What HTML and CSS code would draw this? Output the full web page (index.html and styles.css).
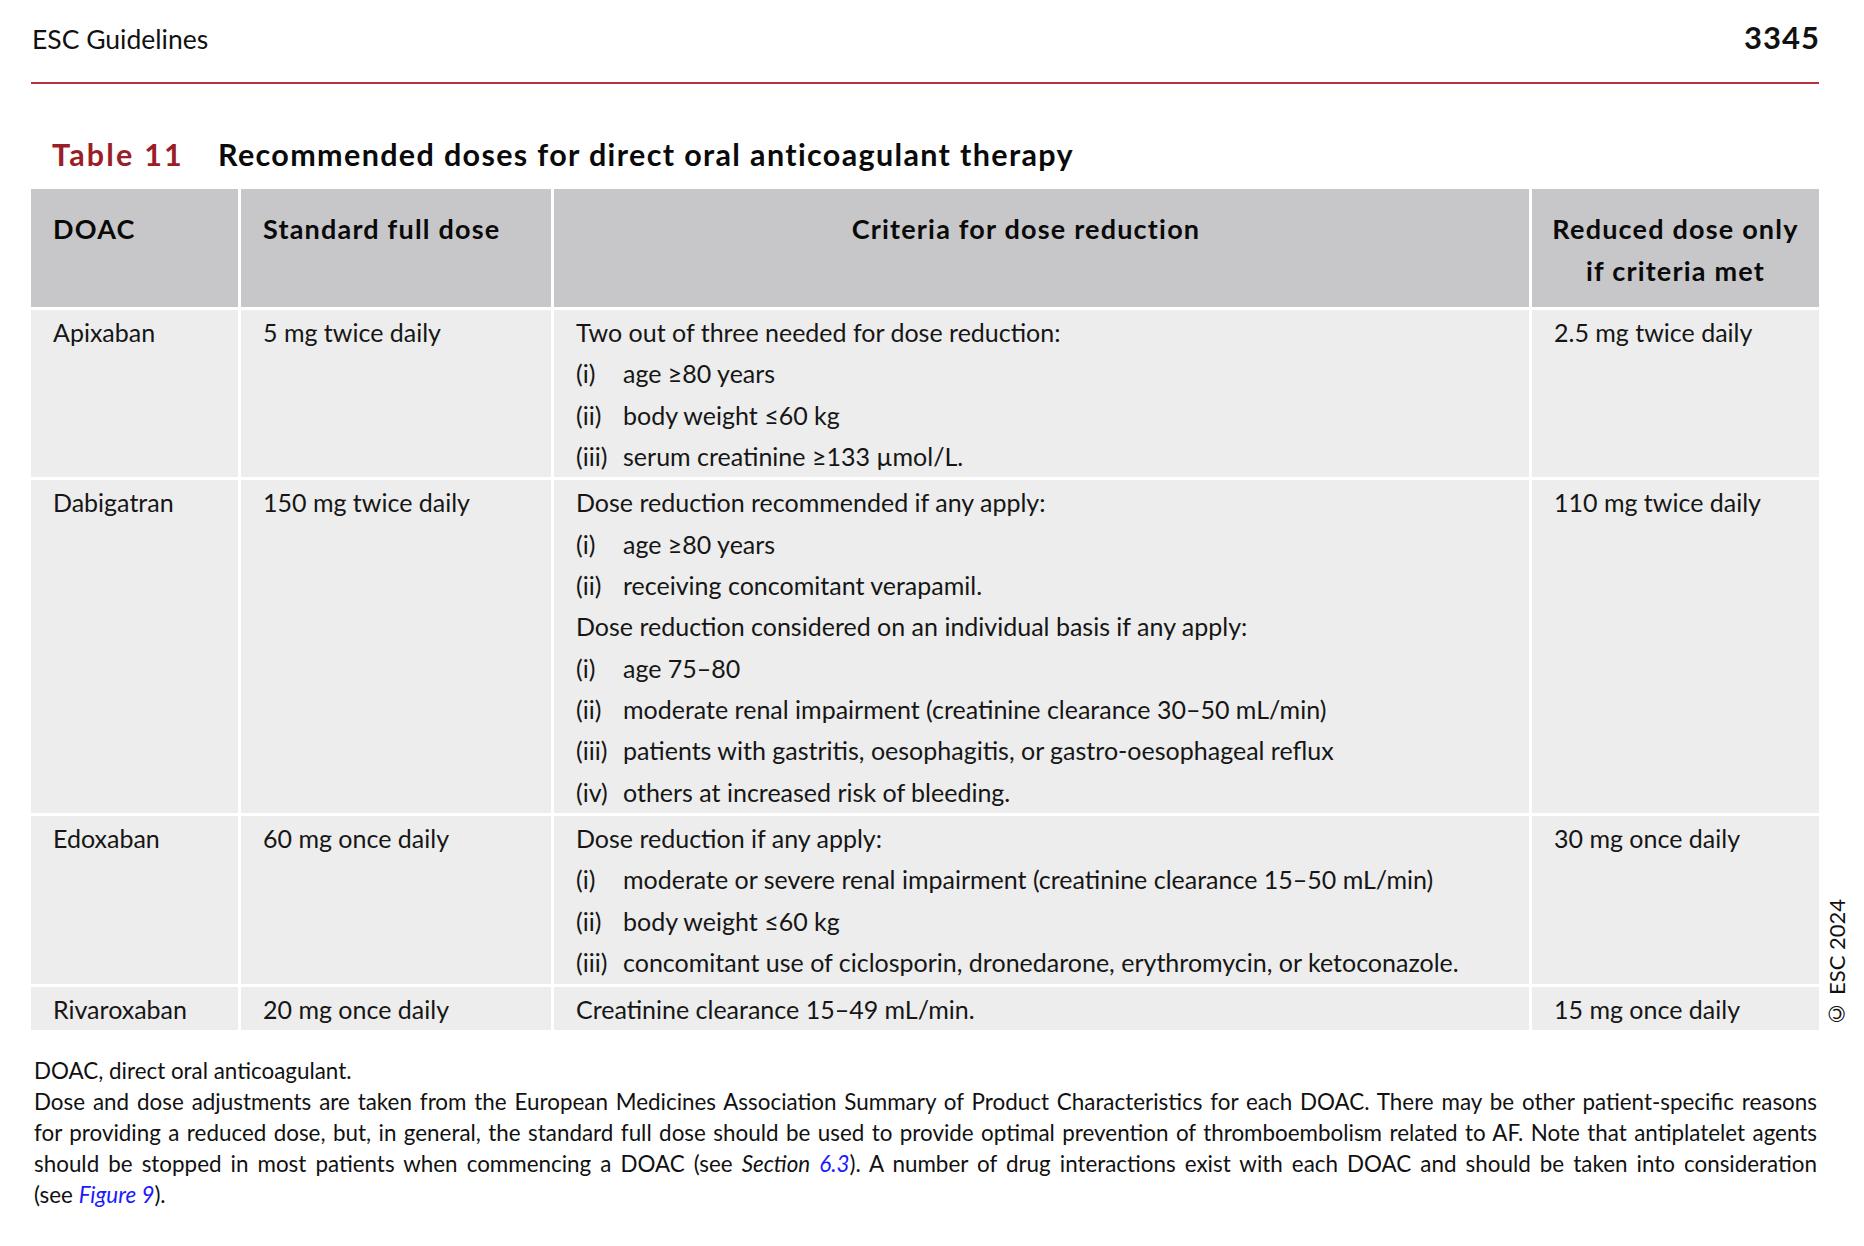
FILE: index.html
```html
<!DOCTYPE html>
<html lang="en">
<head>
<meta charset="utf-8">
<title>ESC Guidelines – Table 11</title>
<link rel="stylesheet" href="styles.css">
</head>
<body>
<div class="page">
  <header class="running-head">
    <span class="journal">ESC Guidelines</span>
    <span class="pageno">3345</span>
  </header>

  <h1 class="caption"><span class="label">Table 11</span><span class="title">Recommended doses for direct oral anticoagulant therapy</span></h1>

  <div class="table-wrap">
    <div class="dose-table">
      <div class="th">DOAC</div>
      <div class="th">Standard full dose</div>
      <div class="th th-center th-criteria">Criteria for dose reduction</div>
      <div class="th th-center th-reduced">Reduced dose only<br>if criteria met</div>

      <div class="td">Apixaban</div>
      <div class="td">5 mg twice daily</div>
      <div class="td">
        <div>Two out of three needed for dose reduction:</div>
        <div class="item"><span class="num">(i)</span><span>age ≥80 years</span></div>
        <div class="item"><span class="num">(ii)</span><span>body weight ≤60 kg</span></div>
        <div class="item"><span class="num">(iii)</span><span>serum creatinine ≥133 µmol/L.</span></div>
      </div>
      <div class="td">2.5 mg twice daily</div>

      <div class="td">Dabigatran</div>
      <div class="td">150 mg twice daily</div>
      <div class="td">
        <div>Dose reduction recommended if any apply:</div>
        <div class="item"><span class="num">(i)</span><span>age ≥80 years</span></div>
        <div class="item"><span class="num">(ii)</span><span>receiving concomitant verapamil.</span></div>
        <div>Dose reduction considered on an individual basis if any apply:</div>
        <div class="item"><span class="num">(i)</span><span>age 75–80</span></div>
        <div class="item"><span class="num">(ii)</span><span>moderate renal impairment (creatinine clearance 30–50 mL/min)</span></div>
        <div class="item"><span class="num">(iii)</span><span>patients with gastritis, oesophagitis, or gastro-oesophageal reflux</span></div>
        <div class="item"><span class="num">(iv)</span><span>others at increased risk of bleeding.</span></div>
      </div>
      <div class="td">110 mg twice daily</div>

      <div class="td">Edoxaban</div>
      <div class="td">60 mg once daily</div>
      <div class="td">
        <div>Dose reduction if any apply:</div>
        <div class="item"><span class="num">(i)</span><span>moderate or severe renal impairment (creatinine clearance 15–50 mL/min)</span></div>
        <div class="item"><span class="num">(ii)</span><span>body weight ≤60 kg</span></div>
        <div class="item"><span class="num">(iii)</span><span>concomitant use of ciclosporin, dronedarone, erythromycin, or ketoconazole.</span></div>
      </div>
      <div class="td">30 mg once daily</div>

      <div class="td">Rivaroxaban</div>
      <div class="td">20 mg once daily</div>
      <div class="td">Creatinine clearance 15–49 mL/min.</div>
      <div class="td">15 mg once daily</div>
    </div>
    <div class="copyright">© ESC 2024</div>
  </div>

  <div class="notes">
    <p>DOAC, direct oral anticoagulant.</p>
    <p><span class="line">Dose and dose adjustments are taken from the European Medicines Association Summary of Product Characteristics for each DOAC. There may be other patient-specific reasons</span>
    <span class="line">for providing a reduced dose, but, in general, the standard full dose should be used to provide optimal prevention of thromboembolism related to AF. Note that antiplatelet agents</span>
    <span class="line">should be stopped in most patients when commencing a DOAC (see <em>Section</em> <a class="xref" href="#">6.3</a>). A number of drug interactions exist with each DOAC and should be taken into consideration</span>
    <span class="line last">(see <a class="xref" href="#">Figure 9</a>).</span></p>
  </div>
</div>
</body>
</html>
```

FILE: styles.css
```css
html, body {
  margin: 0;
  padding: 0;
  background: #ffffff;
}

body {
  font-family: "Lato", "Open Sans", "Liberation Sans", sans-serif;
  color: #111111;
}

.page {
  padding: 0 45px 0 31px;
}

.running-head {
  display: flex;
  justify-content: space-between;
  align-items: baseline;
  height: 60px;
  padding-top: 22px;
  border-bottom: 2px solid #b3343b;
}

.journal {
  font-size: 26.5px;
  line-height: 30px;
  padding-left: 1px;
}

.pageno {
  font-size: 31px;
  line-height: 30px;
  font-weight: 700;
  letter-spacing: 1px;
  margin-right: -1px;
}

.caption {
  margin: 52px 0 17px 0;
  padding-left: 21px;
  font-size: 30.5px;
  line-height: 36px;
  font-weight: 700;
  letter-spacing: 1.35px;
  display: flex;
}

.caption .label {
  color: #9b1d25;
  width: 166px;
  flex: none;
  letter-spacing: 2.2px;
}

.caption .title {
  color: #0a0a0a;
}

.table-wrap {
  position: relative;
}

.dose-table {
  display: grid;
  grid-template-columns: 207px 310px 975px 287px;
  gap: 3px;
  font-size: 25px;
}

.th {
  background: #c7c7c9;
  font-weight: 700;
  font-size: 27px;
  letter-spacing: 1.2px;
  line-height: 42px;
  padding: 19px 22px 15px 22px;
  color: #0a0a0a;
}

.th-center {
  text-align: center;
}

.th-criteria {
  padding-right: 53px;
}

.th-reduced {
  padding-left: 8px;
  padding-right: 8px;
  white-space: nowrap;
}

.td {
  background: #ecedec;
  line-height: 41.35px;
  padding: 2px 22px 0 22px;
  color: #161616;
}

.item {
  display: flex;
}

.item .num {
  width: 47px;
  flex: none;
}

.copyright {
  position: absolute;
  left: 100%;
  bottom: 2px;
  margin-left: 6px;
  writing-mode: vertical-rl;
  transform: rotate(180deg);
  font-size: 22px;
  line-height: 24px;
  white-space: nowrap;
  color: #111111;
}

.notes {
  margin-top: 25px;
  padding: 0 2px 0 3px;
  font-size: 22.4px;
  line-height: 31px;
}

.notes p {
  margin: 0;
}

.notes .line {
  display: block;
  text-align: justify;
  text-align-last: justify;
}

.notes .line.last {
  text-align: left;
  text-align-last: left;
}

.notes em {
  font-style: italic;
}

.xref {
  color: #1a1aff;
  font-style: italic;
  text-decoration: none;
}
```
